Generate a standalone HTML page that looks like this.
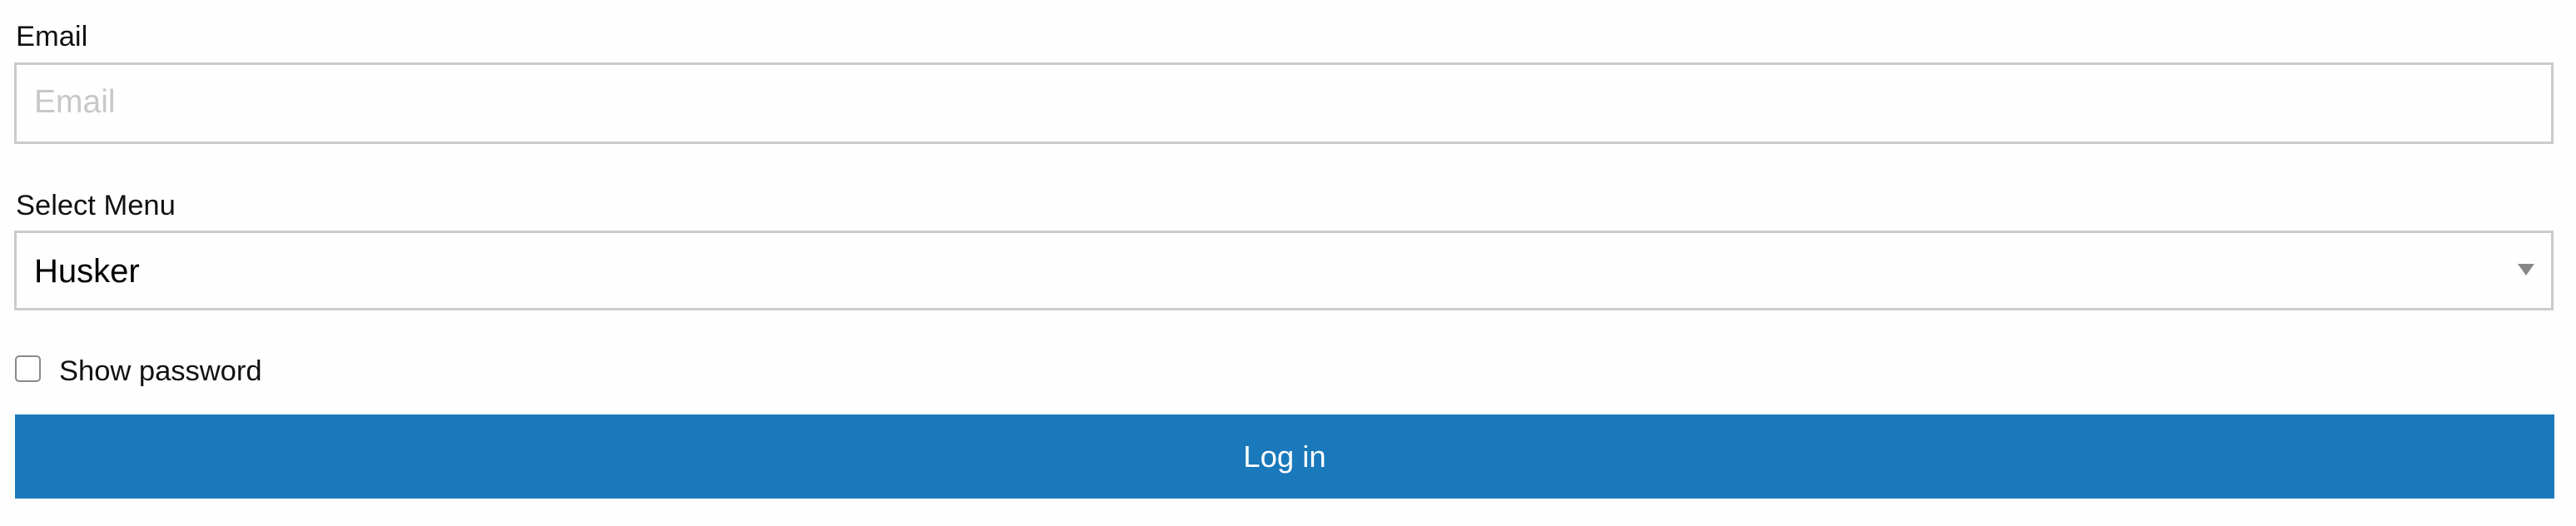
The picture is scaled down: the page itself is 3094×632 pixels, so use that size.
<!DOCTYPE html>
<html><head><meta charset="utf-8"><style>
html,body{margin:0;padding:0;background:#fefefe;width:3094px;height:632px;overflow:hidden;font-family:"Liberation Sans",Arial,sans-serif;}
.abs{position:absolute;}
.lbl{font-size:34.5px;color:#111;line-height:1;}
.box{position:absolute;left:17px;width:3044px;border:3px solid #cbcbcb;background:#fefefe;}
</style></head><body>
<div class="abs lbl" style="left:19px;top:27px;">Email</div>
<div class="box" style="top:75px;height:92px;"></div>
<div class="abs" style="left:41px;top:103px;font-size:39px;line-height:1;color:#c8c8c8;">Email</div>
<div class="abs lbl" style="left:19px;top:230px;">Select Menu</div>
<div class="box" style="top:277px;height:90px;"></div>
<div class="abs" style="left:41px;top:306px;font-size:40px;line-height:1;color:#000;">Husker</div>
<svg class="abs" style="left:3024px;top:317px" width="20" height="15"><polygon points="0,0 20,0 10,14" fill="#878787"/></svg>
<div class="abs" style="left:18px;top:427px;border:2px solid #8a8a8a;border-radius:5px;background:#fff;box-sizing:border-box;width:31px;height:32px;"></div>
<div class="abs lbl" style="left:71px;top:429px;">Show password</div>
<div class="abs" style="left:18px;top:498px;width:3050px;height:101px;background:#1a79bb;color:#fff;font-size:36.5px;text-align:center;line-height:101px;">Log in</div>
</body></html>
